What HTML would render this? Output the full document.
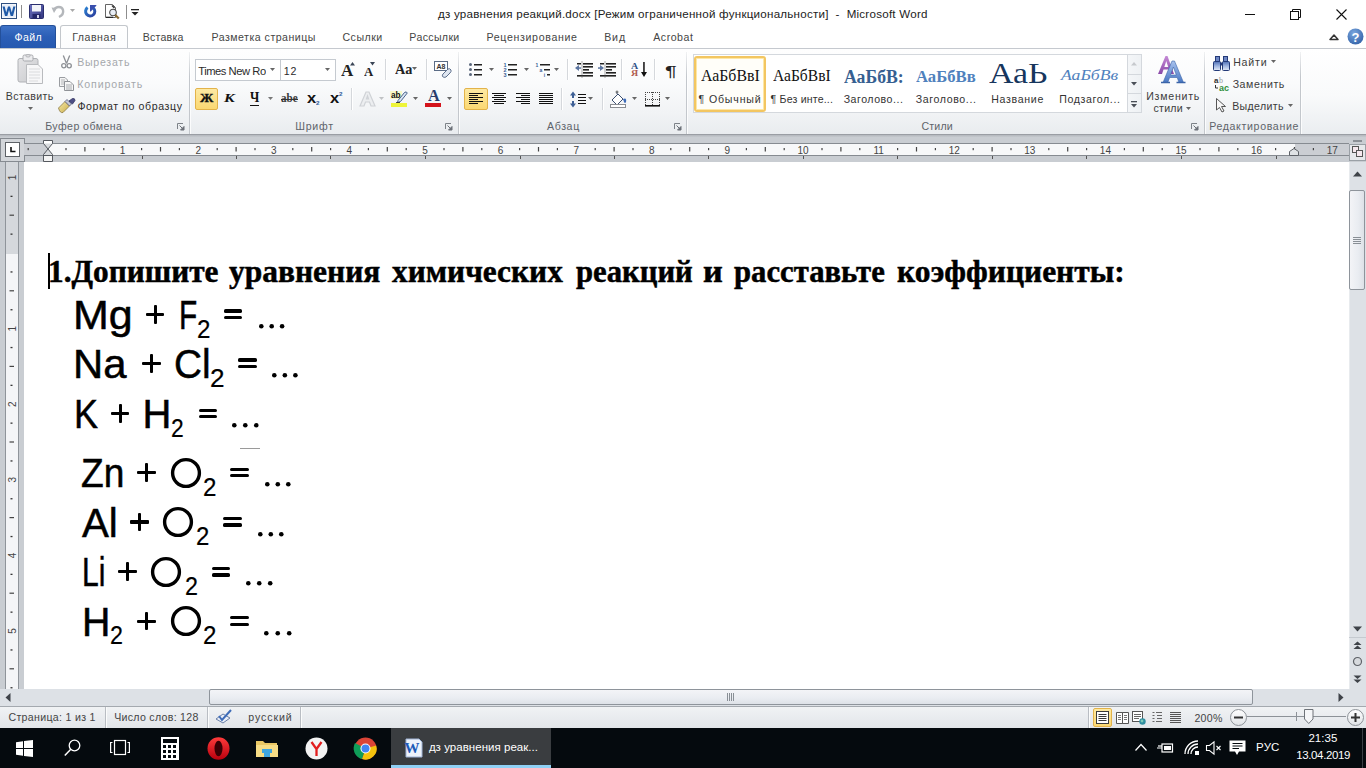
<!DOCTYPE html>
<html><head><meta charset="utf-8">
<style>
*{margin:0;padding:0;box-sizing:border-box}
html,body{width:1366px;height:768px;overflow:hidden;background:#fff;font-family:"Liberation Sans",sans-serif;position:relative}
.a{position:absolute}
.t{line-height:1;white-space:nowrap}
svg.a{overflow:visible}
</style></head><body>

<div class="a" style="left:0px;top:0px;width:1366px;height:48px;background:#fff"></div>
<svg class="a" style="left:1px;top:3px;" width="17" height="17" viewBox="0 0 17 17"><rect x="0.5" y="0.5" width="15" height="15" fill="#fff" stroke="#2f4f80"/><rect x="1.5" y="1.5" width="13" height="13" fill="#e8eef8"/><path d="M1.5 3.5 L4 13 H6.3 L8 7 L9.7 13 H12 L14.5 3.5 H12.3 L10.8 9.5 L9 3.5 H7 L5.2 9.5 L3.7 3.5 Z" fill="#1f5aa8"/></svg>
<div class="a" style="left:21px;top:5px;width:1px;height:13px;background:#8d8d8d"></div>
<svg class="a" style="left:29px;top:4px;" width="15" height="15" viewBox="0 0 15 15"><defs><linearGradient id="sg" x1="0" y1="0" x2="1" y2="1"><stop offset="0" stop-color="#6b70c0"/><stop offset="1" stop-color="#33377f"/></linearGradient></defs><rect x="0.5" y="0.5" width="14" height="14" rx="1" fill="url(#sg)" stroke="#2a2e6e"/><rect x="3" y="1" width="9" height="6.5" fill="#f2f3f8"/><rect x="3.5" y="10" width="8" height="4.5" fill="#23266a"/><rect x="8" y="11" width="2" height="3" fill="#d0d2ea"/></svg>
<svg class="a" style="left:51px;top:4px;" width="14" height="14" viewBox="0 0 14 14"><path d="M3 6 C5 2 11 2 12 6 C13 10 10 12 8 13" fill="none" stroke="#b4b7bb" stroke-width="2.4"/><path d="M0.5 3.5 L6 4 L3 9 Z" fill="#b4b7bb"/></svg>
<svg class="a" style="left:70px;top:9px;" width="6" height="4" viewBox="0 0 6 4"><path d="M0 0 H5 L2.5 3 Z" fill="#a8a8a8"/></svg>
<svg class="a" style="left:84px;top:5px;" width="13" height="12" viewBox="0 0 13 12"><defs><linearGradient id="rg" x1="0" y1="0" x2="1" y2="1"><stop offset="0" stop-color="#2a7fd0"/><stop offset="1" stop-color="#2c3f9e"/></linearGradient></defs><path d="M3.6 2.6 A4.6 4.6 0 1 0 9.3 3" fill="none" stroke="url(#rg)" stroke-width="3"/><path d="M6 0 H12.3 V0.8 L6.8 6.5 H6 Z" fill="#3a4fae"/></svg>
<svg class="a" style="left:105px;top:4px;" width="15" height="15" viewBox="0 0 15 15"><path d="M0.5 0.5 H7.5 L10.5 3.5 V13.5 H0.5 Z" fill="#fff" stroke="#666"/><path d="M1 13.3 H8" stroke="#222" stroke-width="1.2"/><circle cx="8" cy="8.5" r="3.3" fill="#e9eef5" stroke="#4a4a4a" stroke-width="1.1"/><path d="M10.3 11 L13.8 14.5" stroke="#8a6a30" stroke-width="2.2"/><path d="M7 1.5 L9.5 4" stroke="#333" stroke-width="1.5"/></svg>
<div class="a" style="left:126px;top:5px;width:1px;height:14px;background:#8d8d8d"></div>
<svg class="a" style="left:131px;top:9px;" width="9" height="7" viewBox="0 0 9 7"><rect x="0" y="0" width="8" height="1.3" fill="#222"/><path d="M0.5 3 H7.5 L4 6.5 Z" fill="#222"/></svg>
<div class="a t" style="left:437.88px;top:7.68px;font-size:11.6px;color:#222;font-family:'Liberation Sans',sans-serif;font-weight:normal;font-style:normal;letter-spacing:0.238px;">дз уравнения реакций.docx [Режим ограниченной функциональности]&nbsp; -&nbsp; Microsoft Word</div>
<div class="a" style="left:1245px;top:14px;width:10px;height:1px;background:#111"></div>
<svg class="a" style="left:1290px;top:9px;" width="11" height="11" viewBox="0 0 11 11"><rect x="0.5" y="2.5" width="8" height="8" fill="none" stroke="#111"/><path d="M2.5 2.5 V0.5 H10.5 V8.5 H8.5" fill="none" stroke="#111"/></svg>
<svg class="a" style="left:1336px;top:9px;" width="11" height="11" viewBox="0 0 11 11"><path d="M0.5 0.5 L10.5 10.5 M10.5 0.5 L0.5 10.5" stroke="#111" stroke-width="1.1"/></svg>
<svg class="a" style="left:1329px;top:33px;" width="10" height="8" viewBox="0 0 10 8"><path d="M1 6.5 L5 2 L9 6.5 Z" fill="none" stroke="#333" stroke-width="1.5" stroke-linejoin="round"/></svg>
<svg class="a" style="left:1347px;top:28px;" width="17" height="17" viewBox="0 0 17 17"><defs><radialGradient id="hg" cx="0.4" cy="0.3" r="0.8"><stop offset="0" stop-color="#7aa6de"/><stop offset="1" stop-color="#2f5fa6"/></radialGradient></defs><circle cx="8.5" cy="8.5" r="8" fill="url(#hg)"/><text x="8.5" y="13.5" font-family="Liberation Sans" font-weight="bold" font-size="13" fill="#fff" text-anchor="middle">?</text></svg>
<div class="a" style="left:0;top:25px;width:56px;height:23px;border-radius:3px 3px 0 0;background:linear-gradient(#3e72c6,#2b5eb6 50%,#2659b0);border:1px solid #24509a;border-bottom:none"></div>
<div class="a t" style="left:14.42px;top:32.33px;font-size:10.6px;color:#fff;font-family:'Liberation Sans',sans-serif;font-weight:normal;font-style:normal;letter-spacing:0.416px;">Файл</div>
<div class="a" style="left:60px;top:25px;width:68px;height:24px;border-radius:3px 3px 0 0;background:linear-gradient(#fff,#fbfcfd);border:1px solid #c3c7cc;border-bottom:none"></div>
<div class="a t" style="left:72.15px;top:32.33px;font-size:10.6px;color:#454545;font-family:'Liberation Sans',sans-serif;font-weight:normal;font-style:normal;letter-spacing:0.534px;">Главная</div>
<div class="a t" style="left:142.65px;top:32.33px;font-size:10.6px;color:#454545;font-family:'Liberation Sans',sans-serif;font-weight:normal;font-style:normal;letter-spacing:0.245px;">Вставка</div>
<div class="a t" style="left:211.45px;top:32.33px;font-size:10.6px;color:#454545;font-family:'Liberation Sans',sans-serif;font-weight:normal;font-style:normal;letter-spacing:0.493px;">Разметка страницы</div>
<div class="a t" style="left:342.47px;top:32.33px;font-size:10.6px;color:#454545;font-family:'Liberation Sans',sans-serif;font-weight:normal;font-style:normal;letter-spacing:0.492px;">Ссылки</div>
<div class="a t" style="left:409.35px;top:32.33px;font-size:10.6px;color:#454545;font-family:'Liberation Sans',sans-serif;font-weight:normal;font-style:normal;letter-spacing:0.342px;">Рассылки</div>
<div class="a t" style="left:486.45px;top:32.33px;font-size:10.6px;color:#454545;font-family:'Liberation Sans',sans-serif;font-weight:normal;font-style:normal;letter-spacing:0.672px;">Рецензирование</div>
<div class="a t" style="left:604.15px;top:32.33px;font-size:10.6px;color:#454545;font-family:'Liberation Sans',sans-serif;font-weight:normal;font-style:normal;letter-spacing:0.911px;">Вид</div>
<div class="a t" style="left:653.30px;top:32.33px;font-size:10.6px;color:#454545;font-family:'Liberation Sans',sans-serif;font-weight:normal;font-style:normal;letter-spacing:0.506px;">Acrobat</div>
<div class="a" style="left:0px;top:48px;width:1366px;height:1px;background:#c5c9cf"></div>
<div class="a" style="left:0;top:49px;width:1366px;height:85px;background:linear-gradient(#fefefe 0%,#fafbfc 40%,#f1f3f5 75%,#e9ecef 100%)"></div>
<div class="a" style="left:0px;top:134px;width:1366px;height:1px;background:#9a9ea4"></div>
<svg class="a" style="left:17px;top:54px;" width="27" height="31" viewBox="0 0 27 31"><defs><linearGradient id="pg1" x1="0" y1="0" x2="1" y2="1"><stop offset="0" stop-color="#e4e4e6"/><stop offset="1" stop-color="#c9cacd"/></linearGradient></defs><rect x="1" y="4.5" width="20" height="23.5" rx="2" fill="url(#pg1)" stroke="#b0b2b6"/><rect x="6" y="1" width="10" height="6" rx="1.5" fill="#ececee" stroke="#a9abaf"/><rect x="9" y="0.5" width="4" height="2.5" rx="1" fill="#dcdcde" stroke="#a9abaf" stroke-width="0.7"/><path d="M9.5 10.5 H21 L25.5 15 V29.5 H9.5 Z" fill="#f7f7f8" stroke="#b9bbbe"/><path d="M12 15 H23 M12 18 H23 M12 21 H23 M12 24 H23 M12 27 H21" stroke="#dadbdd"/></svg>
<div class="a t" style="left:5.75px;top:90.83px;font-size:10.6px;color:#3c3c3c;font-family:'Liberation Sans',sans-serif;font-weight:normal;font-style:normal;letter-spacing:0.390px;">Вставить</div>
<svg class="a" style="left:28px;top:107px;" width="6" height="4" viewBox="0 0 6 4"><path d="M0 0 H5 L2.5 3 Z" fill="#666"/></svg>
<svg class="a" style="left:61px;top:55px;" width="11" height="14" viewBox="0 0 11 14"><path d="M2.3 0.5 L5.5 8.5 M8.7 0.5 L5.5 8.5" stroke="#8d9095" stroke-width="1.3" fill="none"/><circle cx="2.8" cy="10.8" r="2.1" fill="none" stroke="#8d9095" stroke-width="1.3"/><circle cx="8.2" cy="10.8" r="2.1" fill="none" stroke="#8d9095" stroke-width="1.3"/></svg>
<div class="a t" style="left:77.15px;top:57.33px;font-size:10.6px;color:#a5a8ac;font-family:'Liberation Sans',sans-serif;font-weight:normal;font-style:normal;letter-spacing:0.736px;">Вырезать</div>
<svg class="a" style="left:59px;top:77px;" width="16" height="14" viewBox="0 0 16 14"><path d="M0.5 0.5 H6 L8.5 3 V9.5 H0.5 Z" fill="#f4f4f4" stroke="#9a9da1"/><path d="M2 3 H6 M2 5 H7 M2 7 H7" stroke="#b4b6b9"/><path d="M5.5 4.5 H11 L14.5 8 V13.5 H5.5 Z" fill="#f6f6f6" stroke="#8f9297"/><path d="M7 8 H13 M7 10 H13 M7 12 H13" stroke="#a9acb0"/></svg>
<div class="a t" style="left:77.15px;top:79.33px;font-size:10.6px;color:#a5a8ac;font-family:'Liberation Sans',sans-serif;font-weight:normal;font-style:normal;letter-spacing:0.910px;">Копировать</div>
<svg class="a" style="left:58px;top:98px;" width="18" height="16" viewBox="0 0 18 16"><defs><linearGradient id="fpg" x1="0" y1="0" x2="1" y2="1"><stop offset="0" stop-color="#f6eaa8"/><stop offset="1" stop-color="#c9ac4a"/></linearGradient></defs><path d="M0.5 10 L7 3.5 L11.5 8 L5 14.5 Q2 15.5 0.5 10 Z" fill="url(#fpg)" stroke="#8b7a45" stroke-width="0.8"/><path d="M7 3.5 L9 1.5 L13.5 6 L11.5 8 Z" fill="#c5c8d8" stroke="#555a78" stroke-width="0.8"/><path d="M11 3 L14.5 0.5 Q17 0 17 2.5 L14.5 6 Z" fill="#4d4f86" stroke="#30325e" stroke-width="0.8"/></svg>
<div class="a t" style="left:77.42px;top:101.33px;font-size:10.6px;color:#2b2b2b;font-family:'Liberation Sans',sans-serif;font-weight:normal;font-style:normal;letter-spacing:0.597px;">Формат по образцу</div>
<div class="a t" style="left:45.15px;top:121.33px;font-size:10.6px;color:#5e636a;font-family:'Liberation Sans',sans-serif;font-weight:normal;font-style:normal;letter-spacing:0.438px;">Буфер обмена</div>
<svg class="a" style="left:177px;top:123px;" width="8" height="8" viewBox="0 0 8 8"><path d="M0.5 6 V0.5 H6" fill="none" stroke="#7d8288"/><path d="M2.5 2.5 L6.5 6.5 M7 3.5 V7 H3.5 Z" stroke="#6c7178" fill="#6c7178"/></svg>
<div class="a" style="left:189px;top:52px;width:1px;height:82px;background:linear-gradient(rgba(190,195,201,0.2),#c3c7cc 30%,#c3c7cc)"></div>
<div class="a" style="left:190px;top:52px;width:1px;height:82px;background:rgba(255,255,255,0.8)"></div>
<div class="a" style="left:195px;top:59px;width:86px;height:22px;background:#fff;border:1px solid #c5cad0"></div>
<div class="a" style="left:196px;top:60px;width:70px;height:20px;overflow:hidden">
<div class="a t" style="left:2.18px;top:5.52px;font-size:11.2px;color:#2b2b2b;font-family:'Liberation Sans',sans-serif;font-weight:normal;font-style:normal;letter-spacing:-0.45px;">Times New Roman</div>
</div>
<svg class="a" style="left:270px;top:68px;" width="6" height="4" viewBox="0 0 6 4"><path d="M0 0 H5 L2.5 3 Z" fill="#666"/></svg>
<div class="a" style="left:280px;top:59px;width:56px;height:22px;background:#fff;border:1px solid #c5cad0"></div>
<div class="a t" style="left:283.70px;top:66.33px;font-size:10.6px;color:#2b2b2b;font-family:'Liberation Sans',sans-serif;font-weight:normal;font-style:normal;letter-spacing:0.859px;">12</div>
<svg class="a" style="left:325px;top:68px;" width="6" height="4" viewBox="0 0 6 4"><path d="M0 0 H5 L2.5 3 Z" fill="#666"/></svg>
<div class="a t" style="left:340.83px;top:61.76px;font-size:17px;color:#222;font-family:'Liberation Serif',serif;font-weight:bold;font-style:normal;transform-origin:0 0;transform:scaleX(1.0013);">A</div>
<svg class="a" style="left:350px;top:62px;" width="6" height="4" viewBox="0 0 6 4"><path d="M0 3.5 H5 L2.5 0 Z" fill="#3a4556"/></svg>
<div class="a t" style="left:363.87px;top:65.95px;font-size:12px;color:#222;font-family:'Liberation Serif',serif;font-weight:bold;font-style:normal;transform-origin:0 0;transform:scaleX(1.0638);">A</div>
<svg class="a" style="left:370px;top:62px;" width="6" height="4" viewBox="0 0 6 4"><path d="M0 0 H5 L2.5 3.5 Z" fill="#3a4556"/></svg>
<div class="a" style="left:385px;top:59px;width:1px;height:21px;background:#d5d8dc"></div>
<div class="a" style="left:386px;top:59px;width:1px;height:21px;background:#fff"></div>
<div class="a t" style="left:394.86px;top:62.44px;font-size:15px;color:#222;font-family:'Liberation Serif',serif;font-weight:bold;font-style:normal;transform-origin:0 0;transform:scaleX(0.9484);">Aa</div>
<svg class="a" style="left:412px;top:67px;" width="6" height="4" viewBox="0 0 6 4"><path d="M0 0 H5 L2.5 3 Z" fill="#666"/></svg>
<div class="a" style="left:426px;top:59px;width:1px;height:21px;background:#d5d8dc"></div>
<div class="a" style="left:427px;top:59px;width:1px;height:21px;background:#fff"></div>
<svg class="a" style="left:434px;top:61px;" width="18" height="18" viewBox="0 0 18 18"><rect x="0.5" y="0.5" width="13" height="9" fill="#fff" stroke="#5b6c86"/><text x="7" y="8" font-family="Liberation Sans" font-weight="bold" font-size="7" fill="#333" text-anchor="middle">A8</text><path d="M9 13 L14 8 Q16 7 17 9 Q17.5 10.5 16 12 L12 16 Q10 17 8.5 15.5 Q8 14 9 13 Z" fill="#dfe6f0" stroke="#5d6f8c"/></svg>
<div class="a" style="left:195px;top:88px;width:23px;height:22px;background:linear-gradient(#fde9a3,#fbd872);border:1px solid #e3b34a;border-radius:2px"></div>
<div class="a t" style="left:200.00px;top:92.33px;font-size:12.5px;color:#111;font-family:'Liberation Serif',serif;font-weight:bold;font-style:normal;transform-origin:0 0;transform:scaleX(1.0828);-webkit-text-stroke:0.3px #111;">Ж</div>
<div class="a t" style="left:224.16px;top:92.33px;font-size:12.5px;color:#111;font-family:'Liberation Serif',serif;font-weight:bold;font-style:italic;transform-origin:0 0;transform:scaleX(1.2735);">К</div>
<div class="a t" style="left:249.87px;top:91.28px;font-size:14px;color:#111;font-family:'Liberation Serif',serif;font-weight:bold;font-style:normal;transform-origin:0 0;transform:scaleX(0.9054);">Ч</div>
<div class="a" style="left:250px;top:105px;width:9px;height:1.2px;background:#111"></div>
<svg class="a" style="left:268px;top:97px;" width="6" height="4" viewBox="0 0 6 4"><path d="M0 0 H5 L2.5 3 Z" fill="#777"/></svg>
<div class="a t" style="left:280.67px;top:93.37px;font-size:11.5px;color:#3a3a3a;font-family:'Liberation Serif',serif;font-weight:bold;font-style:normal;transform-origin:0 0;transform:scaleX(0.9628);">abe</div>
<div class="a" style="left:280.5px;top:99px;width:17px;height:1px;background:#333"></div>
<div class="a t" style="left:306.92px;top:91.15px;font-size:14px;color:#111;font-family:'Liberation Sans',sans-serif;font-weight:bold;font-style:normal;transform-origin:0 0;transform:scaleX(1.1796);">x</div>
<div class="a t" style="left:316.28px;top:100.42px;font-size:6px;color:#2f5a9a;font-family:'Liberation Sans',sans-serif;font-weight:bold;font-style:normal;transform-origin:0 0;transform:scaleX(1.0417);">2</div>
<div class="a t" style="left:329.92px;top:91.15px;font-size:14px;color:#111;font-family:'Liberation Sans',sans-serif;font-weight:bold;font-style:normal;transform-origin:0 0;transform:scaleX(1.1796);">x</div>
<div class="a t" style="left:338.78px;top:91.42px;font-size:6px;color:#2f5a9a;font-family:'Liberation Sans',sans-serif;font-weight:bold;font-style:normal;transform-origin:0 0;transform:scaleX(1.0417);">2</div>
<div class="a" style="left:351px;top:88px;width:1px;height:22px;background:#d5d8dc"></div>
<div class="a" style="left:352px;top:88px;width:1px;height:22px;background:#fff"></div>
<svg class="a" style="left:359px;top:91px;" width="17" height="16" viewBox="0 0 17 16"><path d="M1 15 L7 1 H10 L16 15 H12 L10.5 11 H6.5 L5 15 Z M7.5 8 H9.5 L8.5 5 Z" fill="#eceef0" stroke="#cfd2d6" stroke-width="1.2"/></svg>
<svg class="a" style="left:379px;top:97px;" width="6" height="4" viewBox="0 0 6 4"><path d="M0 0 H5 L2.5 3 Z" fill="#c0c2c5"/></svg>
<div class="a" style="left:390px;top:91px;width:12px;height:8px;background:rgba(250,250,150,0.5)"></div>
<div class="a t" style="left:390.75px;top:89.76px;font-size:9.5px;color:#111;font-family:'Liberation Sans',sans-serif;font-weight:bold;font-style:normal;transform-origin:0 0;transform:scaleX(0.8652);">ab</div>
<svg class="a" style="left:397px;top:91px;" width="11" height="12" viewBox="0 0 11 12"><path d="M1 9.5 L7.5 1.5 Q9.5 0 10.3 2 L3.5 10.5 L0.5 11.5 Z" fill="#dce6f4" stroke="#37527e" stroke-width="0.9"/><path d="M-1 11.5 H3" stroke="#222" stroke-width="0.8"/></svg>
<div class="a" style="left:390.5px;top:103px;width:16.5px;height:3.6px;background:#eef53a"></div>
<svg class="a" style="left:413px;top:97px;" width="6" height="4" viewBox="0 0 6 4"><path d="M0 0 H5 L2.5 3 Z" fill="#666"/></svg>
<div class="a t" style="left:427.84px;top:88.30px;font-size:16px;color:#2a3d6c;font-family:'Liberation Serif',serif;font-weight:bold;font-style:normal;transform-origin:0 0;transform:scaleX(1.0195);">A</div>
<div class="a" style="left:425px;top:102.8px;width:16px;height:4px;background:#d4141c"></div>
<svg class="a" style="left:447px;top:97px;" width="6" height="4" viewBox="0 0 6 4"><path d="M0 0 H5 L2.5 3 Z" fill="#666"/></svg>
<div class="a t" style="left:295.15px;top:121.33px;font-size:10.6px;color:#5e636a;font-family:'Liberation Sans',sans-serif;font-weight:normal;font-style:normal;letter-spacing:0.796px;">Шрифт</div>
<svg class="a" style="left:445px;top:123px;" width="8" height="8" viewBox="0 0 8 8"><path d="M0.5 6 V0.5 H6" fill="none" stroke="#7d8288"/><path d="M2.5 2.5 L6.5 6.5 M7 3.5 V7 H3.5 Z" stroke="#6c7178" fill="#6c7178"/></svg>
<div class="a" style="left:458px;top:52px;width:1px;height:82px;background:linear-gradient(rgba(190,195,201,0.2),#c3c7cc 30%,#c3c7cc)"></div>
<div class="a" style="left:459px;top:52px;width:1px;height:82px;background:rgba(255,255,255,0.8)"></div>
<svg class="a" style="left:469px;top:63px;" width="14" height="13" viewBox="0 0 14 13"><circle cx="1.5" cy="1.5" r="1.5" fill="#58657a"/><circle cx="1.5" cy="6.5" r="1.5" fill="#58657a"/><circle cx="1.5" cy="11.5" r="1.5" fill="#58657a"/><rect x="5" y="1" width="8" height="1.5" fill="#222"/><rect x="5" y="6" width="8" height="1.5" fill="#222"/><rect x="5" y="11" width="8" height="1.5" fill="#222"/></svg>
<svg class="a" style="left:489px;top:68px;" width="6" height="4" viewBox="0 0 6 4"><path d="M0 0 H5 L2.5 3 Z" fill="#666"/></svg>
<svg class="a" style="left:502px;top:62px;" width="16" height="16" viewBox="0 0 16 16"><text x="3" y="5" font-size="5.5" font-weight="bold" font-family="Liberation Sans" fill="#3a5f95" text-anchor="middle">1</text><text x="3" y="10" font-size="5.5" font-weight="bold" font-family="Liberation Sans" fill="#3a5f95" text-anchor="middle">2</text><text x="3" y="15" font-size="5.5" font-weight="bold" font-family="Liberation Sans" fill="#3a5f95" text-anchor="middle">3</text><rect x="6" y="2" width="9" height="1.5" fill="#222"/><rect x="6" y="7" width="9" height="1.5" fill="#222"/><rect x="6" y="12" width="9" height="1.5" fill="#222"/></svg>
<svg class="a" style="left:524px;top:68px;" width="6" height="4" viewBox="0 0 6 4"><path d="M0 0 H5 L2.5 3 Z" fill="#666"/></svg>
<svg class="a" style="left:535px;top:62px;" width="18" height="16" viewBox="0 0 18 16"><text x="2" y="4.5" font-size="5" font-weight="bold" font-family="Liberation Sans" fill="#3a5f95" text-anchor="middle">1</text><text x="6" y="10" font-size="5" font-weight="bold" font-family="Liberation Sans" fill="#3a5f95" text-anchor="middle">a</text><text x="9.5" y="15" font-size="5" font-weight="bold" font-family="Liberation Sans" fill="#3a5f95" text-anchor="middle">i</text><rect x="5" y="2" width="10" height="1.5" fill="#222"/><rect x="9" y="7" width="6" height="1.5" fill="#222"/><rect x="12" y="12" width="3" height="1.5" fill="#222"/></svg>
<svg class="a" style="left:554px;top:68px;" width="6" height="4" viewBox="0 0 6 4"><path d="M0 0 H5 L2.5 3 Z" fill="#666"/></svg>
<div class="a" style="left:567px;top:59px;width:1px;height:21px;background:#d5d8dc"></div>
<div class="a" style="left:568px;top:59px;width:1px;height:21px;background:#fff"></div>
<svg class="a" style="left:575px;top:61px;" width="18" height="17" viewBox="0 0 18 17"><rect x="2" y="2" width="4" height="1.5" fill="#222"/><rect x="8" y="2" width="10" height="1.6" fill="#222"/><rect x="8" y="5" width="10" height="1.6" fill="#222"/><rect x="8" y="8" width="6" height="1.6" fill="#222"/><rect x="8" y="11" width="10" height="1.6" fill="#222"/><rect x="2" y="14" width="16" height="1.6" fill="#222"/><path d="M0 7 L4 4 V10 Z" fill="#5a74a0"/><rect x="3" y="6.3" width="3" height="1.5" fill="#5a74a0"/><rect x="6.6" y="0" width="0.8" height="17" fill="#555" opacity="0.6"/></svg>
<svg class="a" style="left:598px;top:61px;" width="18" height="17" viewBox="0 0 18 17"><rect x="2" y="2" width="4" height="1.5" fill="#222"/><rect x="8" y="2" width="10" height="1.6" fill="#222"/><rect x="8" y="5" width="10" height="1.6" fill="#222"/><rect x="8" y="8" width="6" height="1.6" fill="#222"/><rect x="8" y="11" width="10" height="1.6" fill="#222"/><rect x="2" y="14" width="16" height="1.6" fill="#222"/><path d="M6 7 L2 4 V10 Z" fill="#5a74a0"/><rect x="0" y="6.3" width="3" height="1.5" fill="#5a74a0"/><rect x="6.6" y="0" width="0.8" height="17" fill="#555" opacity="0.6"/></svg>
<div class="a" style="left:621px;top:59px;width:1px;height:21px;background:#d5d8dc"></div>
<div class="a" style="left:622px;top:59px;width:1px;height:21px;background:#fff"></div>
<div class="a t" style="left:630.90px;top:62.46px;font-size:9px;color:#2e4f86;font-family:'Liberation Serif',serif;font-weight:bold;font-style:normal;transform-origin:0 0;transform:scaleX(1.1032);">A</div>
<div class="a t" style="left:631.00px;top:69.46px;font-size:9px;color:#b05a50;font-family:'Liberation Serif',serif;font-weight:bold;font-style:normal;transform-origin:0 0;transform:scaleX(1.1032);">Я</div>
<svg class="a" style="left:641px;top:62px;" width="6" height="16" viewBox="0 0 6 16"><rect x="2.2" y="0" width="1.5" height="12" fill="#111"/><path d="M0 10 H6 L3 15 Z" fill="#111"/></svg>
<div class="a" style="left:654px;top:59px;width:1px;height:21px;background:#d5d8dc"></div>
<div class="a" style="left:655px;top:59px;width:1px;height:21px;background:#fff"></div>
<div class="a t" style="left:665.12px;top:64.15px;font-size:14px;color:#222;font-family:'Liberation Sans',sans-serif;font-weight:normal;font-style:normal;transform-origin:0 0;transform:scaleX(1.5699);">¶</div>
<div class="a" style="left:464px;top:88px;width:24px;height:22px;background:linear-gradient(#fde9a3,#fbd872);border:1px solid #e3b34a;border-radius:2px"></div>
<svg class="a" style="left:469px;top:93px;" width="15" height="12" viewBox="0 0 15 12"><rect x="0" y="0" width="14" height="1" fill="#111"/><rect x="0" y="2" width="9" height="1" fill="#111"/><rect x="0" y="4" width="14" height="1" fill="#111"/><rect x="0" y="6" width="9" height="1" fill="#111"/><rect x="0" y="8" width="14" height="1" fill="#111"/><rect x="0" y="10" width="9" height="1" fill="#111"/></svg>
<svg class="a" style="left:492px;top:93px;" width="15" height="12" viewBox="0 0 15 12"><rect x="0" y="0" width="14" height="1" fill="#111"/><rect x="2" y="2" width="10" height="1" fill="#111"/><rect x="0" y="4" width="14" height="1" fill="#111"/><rect x="2" y="6" width="10" height="1" fill="#111"/><rect x="0" y="8" width="14" height="1" fill="#111"/><rect x="2" y="10" width="10" height="1" fill="#111"/></svg>
<svg class="a" style="left:516px;top:93px;" width="15" height="12" viewBox="0 0 15 12"><rect x="0" y="0" width="14" height="1" fill="#111"/><rect x="5" y="2" width="9" height="1" fill="#111"/><rect x="0" y="4" width="14" height="1" fill="#111"/><rect x="5" y="6" width="9" height="1" fill="#111"/><rect x="0" y="8" width="14" height="1" fill="#111"/><rect x="5" y="10" width="9" height="1" fill="#111"/></svg>
<svg class="a" style="left:539px;top:93px;" width="15" height="12" viewBox="0 0 15 12"><rect x="0" y="0" width="14" height="1" fill="#111"/><rect x="0" y="2" width="14" height="1" fill="#111"/><rect x="0" y="4" width="14" height="1" fill="#111"/><rect x="0" y="6" width="14" height="1" fill="#111"/><rect x="0" y="8" width="14" height="1" fill="#111"/><rect x="0" y="10" width="14" height="1" fill="#111"/></svg>
<div class="a" style="left:561px;top:88px;width:1px;height:22px;background:#d5d8dc"></div>
<div class="a" style="left:562px;top:88px;width:1px;height:22px;background:#fff"></div>
<svg class="a" style="left:570px;top:91px;" width="18" height="17" viewBox="0 0 18 17"><path d="M3 0.5 L6 4.5 H4 V7 H2 V4.5 H0 Z" fill="#3e6096"/><path d="M3 16.5 L6 12.5 H4 V10 H2 V12.5 H0 Z" fill="#3e6096"/><path d="M8 3.5 H16 M8 6.5 H16 M8 9.5 H16 M8 12.5 H16" stroke="#111" stroke-width="1.1"/></svg>
<svg class="a" style="left:588px;top:97px;" width="6" height="4" viewBox="0 0 6 4"><path d="M0 0 H5 L2.5 3 Z" fill="#666"/></svg>
<div class="a" style="left:602px;top:88px;width:1px;height:22px;background:#d5d8dc"></div>
<div class="a" style="left:603px;top:88px;width:1px;height:22px;background:#fff"></div>
<svg class="a" style="left:610px;top:91px;" width="19" height="17" viewBox="0 0 19 17"><path d="M2 9 L8 3 L13 8 L7 14 Z" fill="#fff" stroke="#3c4f70" stroke-width="1"/><path d="M7 3 V0.5" stroke="#3c4f70"/><circle cx="7" cy="1" r="1" fill="none" stroke="#666"/><path d="M13 8 Q17 6 16 11 Q15 13 14 11 Z" fill="#3d6bb8"/><rect x="0.5" y="13.5" width="15" height="3" fill="#fff" stroke="#8a8d92"/></svg>
<svg class="a" style="left:632px;top:97px;" width="6" height="4" viewBox="0 0 6 4"><path d="M0 0 H5 L2.5 3 Z" fill="#666"/></svg>
<svg class="a" style="left:645px;top:92px;" width="15" height="15" viewBox="0 0 15 15"><rect x="0" y="0" width="1" height="1" fill="#444"/><rect x="0" y="7" width="1" height="1" fill="#444"/><rect x="0" y="0" width="1" height="1" fill="#444"/><rect x="7" y="0" width="1" height="1" fill="#444"/><rect x="14" y="0" width="1" height="1" fill="#444"/><rect x="2" y="0" width="1" height="1" fill="#444"/><rect x="2" y="7" width="1" height="1" fill="#444"/><rect x="0" y="2" width="1" height="1" fill="#444"/><rect x="7" y="2" width="1" height="1" fill="#444"/><rect x="14" y="2" width="1" height="1" fill="#444"/><rect x="4" y="0" width="1" height="1" fill="#444"/><rect x="4" y="7" width="1" height="1" fill="#444"/><rect x="0" y="4" width="1" height="1" fill="#444"/><rect x="7" y="4" width="1" height="1" fill="#444"/><rect x="14" y="4" width="1" height="1" fill="#444"/><rect x="6" y="0" width="1" height="1" fill="#444"/><rect x="6" y="7" width="1" height="1" fill="#444"/><rect x="0" y="6" width="1" height="1" fill="#444"/><rect x="7" y="6" width="1" height="1" fill="#444"/><rect x="14" y="6" width="1" height="1" fill="#444"/><rect x="8" y="0" width="1" height="1" fill="#444"/><rect x="8" y="7" width="1" height="1" fill="#444"/><rect x="0" y="8" width="1" height="1" fill="#444"/><rect x="7" y="8" width="1" height="1" fill="#444"/><rect x="14" y="8" width="1" height="1" fill="#444"/><rect x="10" y="0" width="1" height="1" fill="#444"/><rect x="10" y="7" width="1" height="1" fill="#444"/><rect x="0" y="10" width="1" height="1" fill="#444"/><rect x="7" y="10" width="1" height="1" fill="#444"/><rect x="14" y="10" width="1" height="1" fill="#444"/><rect x="12" y="0" width="1" height="1" fill="#444"/><rect x="12" y="7" width="1" height="1" fill="#444"/><rect x="0" y="12" width="1" height="1" fill="#444"/><rect x="7" y="12" width="1" height="1" fill="#444"/><rect x="14" y="12" width="1" height="1" fill="#444"/><rect x="14" y="0" width="1" height="1" fill="#444"/><rect x="14" y="7" width="1" height="1" fill="#444"/><rect x="0" y="13" width="15" height="1.6" fill="#111"/></svg>
<svg class="a" style="left:665px;top:97px;" width="6" height="4" viewBox="0 0 6 4"><path d="M0 0 H5 L2.5 3 Z" fill="#666"/></svg>
<div class="a t" style="left:547.00px;top:121.33px;font-size:10.6px;color:#5e636a;font-family:'Liberation Sans',sans-serif;font-weight:normal;font-style:normal;letter-spacing:0.620px;">Абзац</div>
<svg class="a" style="left:674px;top:123px;" width="8" height="8" viewBox="0 0 8 8"><path d="M0.5 6 V0.5 H6" fill="none" stroke="#7d8288"/><path d="M2.5 2.5 L6.5 6.5 M7 3.5 V7 H3.5 Z" stroke="#6c7178" fill="#6c7178"/></svg>
<div class="a" style="left:686px;top:52px;width:1px;height:82px;background:linear-gradient(rgba(190,195,201,0.2),#c3c7cc 30%,#c3c7cc)"></div>
<div class="a" style="left:687px;top:52px;width:1px;height:82px;background:rgba(255,255,255,0.8)"></div>
<div class="a" style="left:693px;top:54px;width:449px;height:59px;background:#fff;border:1px solid #d4d8dd"></div>
<div class="a" style="left:694px;top:56px;width:72px;height:56px;border:2px solid #f3c661;border-radius:3px;background:#fffef9;box-shadow:inset 0 0 0 1px #fde7a6"></div>
<div class="a t" style="left:700.84px;top:67.60px;font-size:16px;color:#111;font-family:'Liberation Serif',serif;font-weight:normal;font-style:normal;transform-origin:0 0;transform:scaleX(0.9891);">АаБбВвI</div>
<div class="a t" style="left:698.58px;top:93.83px;font-size:10.6px;color:#333;font-family:'Liberation Sans',sans-serif;font-weight:normal;font-style:normal;letter-spacing:0.834px;">¶ Обычный</div>
<div class="a t" style="left:772.84px;top:67.60px;font-size:16px;color:#111;font-family:'Liberation Serif',serif;font-weight:normal;font-style:normal;transform-origin:0 0;transform:scaleX(0.9720);">АаБбВвI</div>
<div class="a t" style="left:770.58px;top:93.83px;font-size:10.6px;color:#333;font-family:'Liberation Sans',sans-serif;font-weight:normal;font-style:normal;letter-spacing:0.172px;">¶ Без инте...</div>
<div class="a t" style="left:843.82px;top:67.92px;font-size:18px;color:#365f91;font-family:'Liberation Serif',serif;font-weight:bold;font-style:normal;transform-origin:0 0;transform:scaleX(0.9854);">АаБбВ:</div>
<div class="a t" style="left:843.63px;top:93.83px;font-size:10.6px;color:#333;font-family:'Liberation Sans',sans-serif;font-weight:normal;font-style:normal;letter-spacing:0.527px;">Заголово...</div>
<div class="a t" style="left:915.83px;top:68.60px;font-size:16px;color:#4f81bd;font-family:'Liberation Serif',serif;font-weight:bold;font-style:normal;transform-origin:0 0;transform:scaleX(1.0431);">АаБбВв</div>
<div class="a t" style="left:915.63px;top:93.83px;font-size:10.6px;color:#333;font-family:'Liberation Sans',sans-serif;font-weight:normal;font-style:normal;letter-spacing:0.627px;">Заголово...</div>
<div class="a t" style="left:988.66px;top:57.88px;font-size:30px;color:#17365d;font-family:'Liberation Serif',serif;font-weight:normal;font-style:normal;transform-origin:0 0;transform:scaleX(1.1276);">АаЬ</div>
<div class="a t" style="left:991.15px;top:93.83px;font-size:10.6px;color:#333;font-family:'Liberation Sans',sans-serif;font-weight:normal;font-style:normal;letter-spacing:0.699px;">Название</div>
<div class="a t" style="left:1060.97px;top:68.44px;font-size:15px;color:#4f81bd;font-family:'Liberation Serif',serif;font-weight:normal;font-style:italic;transform-origin:0 0;transform:scaleX(1.1807);">АаБбВв</div>
<div class="a t" style="left:1059.15px;top:93.83px;font-size:10.6px;color:#333;font-family:'Liberation Sans',sans-serif;font-weight:normal;font-style:normal;letter-spacing:0.627px;">Подзагол...</div>
<div class="a" style="left:1127px;top:54px;width:15px;height:59px;background:linear-gradient(90deg,#f4f6f8,#eef1f4);border:1px solid #d4d8dd"></div>
<div class="a" style="left:1128px;top:74px;width:13px;height:1px;background:#d4d8dd"></div>
<div class="a" style="left:1128px;top:93px;width:13px;height:1px;background:#d4d8dd"></div>
<svg class="a" style="left:1131px;top:62px;" width="7" height="4" viewBox="0 0 7 4"><path d="M0 3.5 H6 L3 0 Z" fill="#c6c9cd"/></svg>
<svg class="a" style="left:1131px;top:82px;" width="7" height="4" viewBox="0 0 7 4"><path d="M0 0 H6 L3 3.5 Z" fill="#4a4f57"/></svg>
<svg class="a" style="left:1131px;top:101px;" width="7" height="7" viewBox="0 0 7 7"><rect x="0" y="0" width="6" height="1.3" fill="#4a4f57"/><path d="M0 3 H6 L3 6.5 Z" fill="#4a4f57"/></svg>
<svg class="a" style="left:1157px;top:55px;" width="32" height="28" viewBox="0 0 32 28"><defs><linearGradient id="ag1" x1="0" y1="0" x2="0" y2="1"><stop offset="0" stop-color="#c58ad6"/><stop offset="1" stop-color="#8a4aa8"/></linearGradient><linearGradient id="ag2" x1="0" y1="0" x2="0" y2="1"><stop offset="0" stop-color="#a9c3ee"/><stop offset="1" stop-color="#4a78c4"/></linearGradient></defs><path d="M1 19 L8.5 1 H10.5 L17 19 H13.5 L12 14.5 H6.5 L5 19 Z M7.3 12 H11.2 L9.3 6 Z" fill="url(#ag1)"/><path d="M6 27.5 L15 6 H17.5 L26.5 27.5 H22 L20.2 22.5 H12.6 L10.8 27.5 Z M13.5 20 H19.3 L16.4 12 Z" fill="url(#ag2)" stroke="#3b64a8" stroke-width="0.6"/><path d="M4 27.5 H13 M19.5 27.5 H28.5" stroke="#3b64a8" stroke-width="1.4"/></svg>
<div class="a t" style="left:1146.15px;top:91.33px;font-size:10.6px;color:#3c3c3c;font-family:'Liberation Sans',sans-serif;font-weight:normal;font-style:normal;letter-spacing:0.781px;">Изменить</div>
<div class="a t" style="left:1153.58px;top:103.33px;font-size:10.6px;color:#3c3c3c;font-family:'Liberation Sans',sans-serif;font-weight:normal;font-style:normal;letter-spacing:0.242px;">стили</div>
<svg class="a" style="left:1186px;top:107px;" width="6" height="4" viewBox="0 0 6 4"><path d="M0 0 H5 L2.5 3 Z" fill="#666"/></svg>
<div class="a t" style="left:921.47px;top:121.33px;font-size:10.6px;color:#5e636a;font-family:'Liberation Sans',sans-serif;font-weight:normal;font-style:normal;letter-spacing:0.186px;">Стили</div>
<svg class="a" style="left:1191px;top:123px;" width="8" height="8" viewBox="0 0 8 8"><path d="M0.5 6 V0.5 H6" fill="none" stroke="#7d8288"/><path d="M2.5 2.5 L6.5 6.5 M7 3.5 V7 H3.5 Z" stroke="#6c7178" fill="#6c7178"/></svg>
<div class="a" style="left:1204px;top:52px;width:1px;height:82px;background:linear-gradient(rgba(190,195,201,0.2),#c3c7cc 30%,#c3c7cc)"></div>
<div class="a" style="left:1205px;top:52px;width:1px;height:82px;background:rgba(255,255,255,0.8)"></div>
<svg class="a" style="left:1213px;top:56px;" width="17" height="15" viewBox="0 0 17 15"><defs><linearGradient id="bn" x1="0" y1="0" x2="0" y2="1"><stop offset="0" stop-color="#4f6fb5"/><stop offset="0.5" stop-color="#9fb5e0"/><stop offset="1" stop-color="#e6ecf8"/></linearGradient></defs><rect x="2.5" y="0.5" width="4" height="5" fill="#6d86c4" stroke="#243a78"/><rect x="10.5" y="0.5" width="4" height="5" fill="#6d86c4" stroke="#243a78"/><rect x="0.5" y="5.5" width="7" height="9" rx="1" fill="url(#bn)" stroke="#243a78"/><rect x="9.5" y="5.5" width="7" height="9" rx="1" fill="url(#bn)" stroke="#243a78"/><rect x="7" y="6.5" width="3" height="3" fill="#243a78"/></svg>
<div class="a t" style="left:1233.15px;top:57.33px;font-size:10.6px;color:#3c3c3c;font-family:'Liberation Sans',sans-serif;font-weight:normal;font-style:normal;letter-spacing:0.832px;">Найти</div>
<svg class="a" style="left:1271px;top:60px;" width="6" height="4" viewBox="0 0 6 4"><path d="M0 0 H5 L2.5 3 Z" fill="#666"/></svg>
<svg class="a" style="left:1214px;top:76px;" width="16" height="15" viewBox="0 0 16 15"><text x="0" y="6.5" font-size="8" font-weight="bold" font-family="Liberation Sans" fill="#333">a</text><text x="5" y="6.5" font-size="8" font-family="Liberation Serif" fill="#999">b</text><text x="5" y="14.5" font-size="9" font-weight="bold" font-family="Liberation Sans" fill="#2f8f3a">ac</text><path d="M1.5 9 V12 H4" fill="none" stroke="#333" stroke-width="1"/></svg>
<div class="a t" style="left:1232.63px;top:79.33px;font-size:10.6px;color:#3c3c3c;font-family:'Liberation Sans',sans-serif;font-weight:normal;font-style:normal;letter-spacing:0.593px;">Заменить</div>
<svg class="a" style="left:1216px;top:98px;" width="10" height="15" viewBox="0 0 10 15"><path d="M0.5 0.5 V12 L3.5 9.5 L6 14 L8 13 L5.5 8.5 L9.5 8.5 Z" fill="#f7f7f7" stroke="#555"/></svg>
<div class="a t" style="left:1232.15px;top:101.33px;font-size:10.6px;color:#3c3c3c;font-family:'Liberation Sans',sans-serif;font-weight:normal;font-style:normal;letter-spacing:0.344px;">Выделить</div>
<svg class="a" style="left:1288px;top:104px;" width="6" height="4" viewBox="0 0 6 4"><path d="M0 0 H5 L2.5 3 Z" fill="#666"/></svg>
<div class="a t" style="left:1209.15px;top:121.33px;font-size:10.6px;color:#5e636a;font-family:'Liberation Sans',sans-serif;font-weight:normal;font-style:normal;letter-spacing:0.658px;">Редактирование</div>
<div class="a" style="left:1300px;top:52px;width:1px;height:82px;background:linear-gradient(rgba(190,195,201,0.2),#c3c7cc 30%,#c3c7cc)"></div>
<div class="a" style="left:1301px;top:52px;width:1px;height:82px;background:rgba(255,255,255,0.8)"></div>
<div class="a" style="left:1302px;top:49px;width:64px;height:85px;background:linear-gradient(#fff,#f9fafb 55%,#eaedf0)"></div>
<div class="a" style="left:0px;top:135px;width:1366px;height:27px;background:#c9cdd2"></div>
<div class="a" style="left:0px;top:135px;width:1366px;height:2px;background:linear-gradient(#b3b7bd,#c5c9ce)"></div>
<div class="a" style="left:0px;top:138px;width:25px;height:24px;background:#d3d6da;border:1px solid #868b91"></div>
<div class="a" style="left:5px;top:142px;width:15px;height:15px;background:#fff;border:1px solid #5d6166"></div>
<svg class="a" style="left:10px;top:147px;" width="6" height="6" viewBox="0 0 6 6"><path d="M1 0 V4.5 H5.5" fill="none" stroke="#111" stroke-width="1.6"/></svg>
<div class="a" style="left:24px;top:143px;width:1325px;height:13px;background:#cbced3;border-top:1px solid #868b91;border-bottom:1px solid #868b91"></div>
<div class="a" style="left:47px;top:144px;width:1248px;height:11px;background:#f7f8f9"></div>
<svg class="a" style="left:0px;top:143px;" width="1366" height="13" viewBox="0 0 1366 13"><rect x="27.6" y="5" width="1.2" height="2.2" fill="#444"/><rect x="65.4" y="5" width="1.2" height="2.2" fill="#444"/><rect x="84.3" y="4" width="1.2" height="4.5" fill="#444"/><rect x="103.2" y="5" width="1.2" height="2.2" fill="#444"/><text x="122.6" y="10.5" font-family="Liberation Sans" font-size="10" fill="#444" text-anchor="middle">1</text><rect x="141.0" y="5" width="1.2" height="2.2" fill="#444"/><rect x="159.9" y="4" width="1.2" height="4.5" fill="#444"/><rect x="178.8" y="5" width="1.2" height="2.2" fill="#444"/><text x="198.2" y="10.5" font-family="Liberation Sans" font-size="10" fill="#444" text-anchor="middle">2</text><rect x="216.6" y="5" width="1.2" height="2.2" fill="#444"/><rect x="235.5" y="4" width="1.2" height="4.5" fill="#444"/><rect x="254.4" y="5" width="1.2" height="2.2" fill="#444"/><text x="273.8" y="10.5" font-family="Liberation Sans" font-size="10" fill="#444" text-anchor="middle">3</text><rect x="292.2" y="5" width="1.2" height="2.2" fill="#444"/><rect x="311.1" y="4" width="1.2" height="4.5" fill="#444"/><rect x="330.0" y="5" width="1.2" height="2.2" fill="#444"/><text x="349.4" y="10.5" font-family="Liberation Sans" font-size="10" fill="#444" text-anchor="middle">4</text><rect x="367.8" y="5" width="1.2" height="2.2" fill="#444"/><rect x="386.7" y="4" width="1.2" height="4.5" fill="#444"/><rect x="405.6" y="5" width="1.2" height="2.2" fill="#444"/><text x="425.0" y="10.5" font-family="Liberation Sans" font-size="10" fill="#444" text-anchor="middle">5</text><rect x="443.4" y="5" width="1.2" height="2.2" fill="#444"/><rect x="462.3" y="4" width="1.2" height="4.5" fill="#444"/><rect x="481.2" y="5" width="1.2" height="2.2" fill="#444"/><text x="500.6" y="10.5" font-family="Liberation Sans" font-size="10" fill="#444" text-anchor="middle">6</text><rect x="519.0" y="5" width="1.2" height="2.2" fill="#444"/><rect x="537.9" y="4" width="1.2" height="4.5" fill="#444"/><rect x="556.8" y="5" width="1.2" height="2.2" fill="#444"/><text x="576.2" y="10.5" font-family="Liberation Sans" font-size="10" fill="#444" text-anchor="middle">7</text><rect x="594.6" y="5" width="1.2" height="2.2" fill="#444"/><rect x="613.5" y="4" width="1.2" height="4.5" fill="#444"/><rect x="632.4" y="5" width="1.2" height="2.2" fill="#444"/><text x="651.8" y="10.5" font-family="Liberation Sans" font-size="10" fill="#444" text-anchor="middle">8</text><rect x="670.2" y="5" width="1.2" height="2.2" fill="#444"/><rect x="689.1" y="4" width="1.2" height="4.5" fill="#444"/><rect x="708.0" y="5" width="1.2" height="2.2" fill="#444"/><text x="727.4" y="10.5" font-family="Liberation Sans" font-size="10" fill="#444" text-anchor="middle">9</text><rect x="745.8" y="5" width="1.2" height="2.2" fill="#444"/><rect x="764.7" y="4" width="1.2" height="4.5" fill="#444"/><rect x="783.6" y="5" width="1.2" height="2.2" fill="#444"/><text x="803.0" y="10.5" font-family="Liberation Sans" font-size="10" fill="#444" text-anchor="middle">10</text><rect x="821.4" y="5" width="1.2" height="2.2" fill="#444"/><rect x="840.3" y="4" width="1.2" height="4.5" fill="#444"/><rect x="859.2" y="5" width="1.2" height="2.2" fill="#444"/><text x="878.6" y="10.5" font-family="Liberation Sans" font-size="10" fill="#444" text-anchor="middle">11</text><rect x="897.0" y="5" width="1.2" height="2.2" fill="#444"/><rect x="915.9" y="4" width="1.2" height="4.5" fill="#444"/><rect x="934.8" y="5" width="1.2" height="2.2" fill="#444"/><text x="954.2" y="10.5" font-family="Liberation Sans" font-size="10" fill="#444" text-anchor="middle">12</text><rect x="972.6" y="5" width="1.2" height="2.2" fill="#444"/><rect x="991.5" y="4" width="1.2" height="4.5" fill="#444"/><rect x="1010.4" y="5" width="1.2" height="2.2" fill="#444"/><text x="1029.8" y="10.5" font-family="Liberation Sans" font-size="10" fill="#444" text-anchor="middle">13</text><rect x="1048.2" y="5" width="1.2" height="2.2" fill="#444"/><rect x="1067.1" y="4" width="1.2" height="4.5" fill="#444"/><rect x="1086.0" y="5" width="1.2" height="2.2" fill="#444"/><text x="1105.4" y="10.5" font-family="Liberation Sans" font-size="10" fill="#444" text-anchor="middle">14</text><rect x="1123.8" y="5" width="1.2" height="2.2" fill="#444"/><rect x="1142.7" y="4" width="1.2" height="4.5" fill="#444"/><rect x="1161.6" y="5" width="1.2" height="2.2" fill="#444"/><text x="1181.0" y="10.5" font-family="Liberation Sans" font-size="10" fill="#444" text-anchor="middle">15</text><rect x="1199.4" y="5" width="1.2" height="2.2" fill="#444"/><rect x="1218.3" y="4" width="1.2" height="4.5" fill="#444"/><rect x="1237.2" y="5" width="1.2" height="2.2" fill="#444"/><text x="1256.6" y="10.5" font-family="Liberation Sans" font-size="10" fill="#444" text-anchor="middle">16</text><rect x="1275.0" y="5" width="1.2" height="2.2" fill="#444"/><rect x="1293.9" y="4" width="1.2" height="4.5" fill="#444"/><rect x="1312.8" y="5" width="1.2" height="2.2" fill="#444"/><text x="1332.2" y="10.5" font-family="Liberation Sans" font-size="10" fill="#444" text-anchor="middle">17</text></svg>
<div class="a" style="left:142px;top:156px;width:1px;height:3px;background:#555"></div>
<div class="a" style="left:236px;top:156px;width:1px;height:3px;background:#555"></div>
<div class="a" style="left:330px;top:156px;width:1px;height:3px;background:#555"></div>
<div class="a" style="left:425px;top:156px;width:1px;height:3px;background:#555"></div>
<div class="a" style="left:520px;top:156px;width:1px;height:3px;background:#555"></div>
<div class="a" style="left:614px;top:156px;width:1px;height:3px;background:#555"></div>
<div class="a" style="left:708px;top:156px;width:1px;height:3px;background:#555"></div>
<div class="a" style="left:803px;top:156px;width:1px;height:3px;background:#555"></div>
<div class="a" style="left:897px;top:156px;width:1px;height:3px;background:#555"></div>
<div class="a" style="left:992px;top:156px;width:1px;height:3px;background:#555"></div>
<div class="a" style="left:1086px;top:156px;width:1px;height:3px;background:#555"></div>
<div class="a" style="left:1181px;top:156px;width:1px;height:3px;background:#555"></div>
<div class="a" style="left:1276px;top:156px;width:1px;height:3px;background:#555"></div>
<svg class="a" style="left:43px;top:140px;" width="11" height="22" viewBox="0 0 11 22"><path d="M0.5 0.5 H9.5 V3.5 L5 9 L9.5 14.5 V21.5 H0.5 V14.5 L5 9 L0.5 3.5 Z" fill="#d9dcdf" stroke="#55595f"/><path d="M0.5 15.5 H9.5" stroke="#55595f"/><rect x="1" y="1" width="8" height="2.5" fill="#fff"/><rect x="1" y="16" width="8" height="5" fill="#f4f4f4"/></svg>
<svg class="a" style="left:1289px;top:148px;" width="11" height="8" viewBox="0 0 11 8"><path d="M0.5 7.5 V3.5 L5 0.5 L9.5 3.5 V7.5 Z" fill="#dfe2e5" stroke="#5e6268"/></svg>
<div class="a" style="left:1353px;top:140px;width:9px;height:2px;background:#8a8f95"></div>
<div class="a" style="left:1349px;top:144px;width:17px;height:17px;background:#e6e8eb;border:1px solid #9aa0a6"></div>
<svg class="a" style="left:1352px;top:146px;" width="12" height="12" viewBox="0 0 12 12"><rect x="0.5" y="0.5" width="6" height="6" fill="#f5e8ee" stroke="#555"/><rect x="4.5" y="4.5" width="6" height="6" fill="#f5e8ee" stroke="#555"/></svg>
<div class="a" style="left:0px;top:162px;width:1349px;height:527px;background:#fff"></div>
<div class="a" style="left:0px;top:162px;width:24px;height:527px;background:#c9cdd2"></div>
<div class="a" style="left:5px;top:162px;width:14px;height:527px;background:#f4f5f7;border-left:1px solid #8f949a;border-right:1px solid #8f949a"></div>
<div class="a" style="left:6px;top:162px;width:12px;height:92px;background:#d5d8dc"></div>
<svg class="a" style="left:5px;top:0px;" width="14" height="689" viewBox="0 0 14 689"><text transform="translate(7,177.4) rotate(-90)" x="0" y="3.5" font-family="Liberation Sans" font-size="10" fill="#444" text-anchor="middle">1</text><rect x="5.5" y="195.7" width="2" height="1.3" fill="#333"/><rect x="4.5" y="214.6" width="4.5" height="1.2" fill="#444"/><rect x="5.5" y="233.5" width="2" height="1.3" fill="#333"/><rect x="5.5" y="271.3" width="2" height="1.3" fill="#333"/><rect x="4.5" y="290.2" width="4.5" height="1.2" fill="#444"/><rect x="5.5" y="309.1" width="2" height="1.3" fill="#333"/><text transform="translate(7,328.6) rotate(-90)" x="0" y="3.5" font-family="Liberation Sans" font-size="10" fill="#444" text-anchor="middle">1</text><rect x="5.5" y="346.9" width="2" height="1.3" fill="#333"/><rect x="4.5" y="365.8" width="4.5" height="1.2" fill="#444"/><rect x="5.5" y="384.7" width="2" height="1.3" fill="#333"/><text transform="translate(7,404.2) rotate(-90)" x="0" y="3.5" font-family="Liberation Sans" font-size="10" fill="#444" text-anchor="middle">2</text><rect x="5.5" y="422.5" width="2" height="1.3" fill="#333"/><rect x="4.5" y="441.4" width="4.5" height="1.2" fill="#444"/><rect x="5.5" y="460.3" width="2" height="1.3" fill="#333"/><text transform="translate(7,479.8) rotate(-90)" x="0" y="3.5" font-family="Liberation Sans" font-size="10" fill="#444" text-anchor="middle">3</text><rect x="5.5" y="498.1" width="2" height="1.3" fill="#333"/><rect x="4.5" y="517.0" width="4.5" height="1.2" fill="#444"/><rect x="5.5" y="535.9" width="2" height="1.3" fill="#333"/><text transform="translate(7,555.4) rotate(-90)" x="0" y="3.5" font-family="Liberation Sans" font-size="10" fill="#444" text-anchor="middle">4</text><rect x="5.5" y="573.7" width="2" height="1.3" fill="#333"/><rect x="4.5" y="592.6" width="4.5" height="1.2" fill="#444"/><rect x="5.5" y="611.5" width="2" height="1.3" fill="#333"/><text transform="translate(7,631.0) rotate(-90)" x="0" y="3.5" font-family="Liberation Sans" font-size="10" fill="#444" text-anchor="middle">5</text><rect x="5.5" y="649.3" width="2" height="1.3" fill="#333"/><rect x="4.5" y="668.2" width="4.5" height="1.2" fill="#444"/><rect x="5.5" y="687.1" width="2" height="1.3" fill="#333"/></svg>
<div class="a" style="left:24px;top:162px;width:1325px;height:527px;background:#fff"></div>
<div class="a" style="left:1349px;top:162px;width:17px;height:527px;background:#dde1e6;border-left:1px solid #e8ebee"></div>
<svg class="a" style="left:1353px;top:171px;" width="9" height="6" viewBox="0 0 9 6"><path d="M0 5.5 H9 L4.5 0.5 Z" fill="#3f4349"/></svg>
<div class="a" style="left:1349px;top:190px;width:16px;height:100px;background:linear-gradient(90deg,#f3f4f7,#e9ecf1 60%,#dde1e7);border:1px solid #8e949b;border-radius:2px"></div>
<svg class="a" style="left:1353px;top:237px;" width="9" height="8" viewBox="0 0 9 8"><path d="M0 0.5 H8 M0 2.5 H8 M0 4.5 H8 M0 6.5 H8" stroke="#7d838a" stroke-width="0.9"/></svg>
<svg class="a" style="left:1353px;top:626px;" width="9" height="6" viewBox="0 0 9 6"><path d="M0 0.5 H9 L4.5 5.5 Z" fill="#3f4349"/></svg>
<div class="a" style="left:1349px;top:637px;width:17px;height:1px;background:#c5cad0"></div>
<svg class="a" style="left:1353px;top:641px;" width="9" height="9" viewBox="0 0 9 9"><path d="M0.5 4 L4.5 0.5 L8.5 4 Z M0.5 8 L4.5 4.5 L8.5 8 Z" fill="#3f4349"/></svg>
<svg class="a" style="left:1352px;top:656px;" width="11" height="11" viewBox="0 0 11 11"><circle cx="5.5" cy="5.5" r="4" fill="#d7dade" stroke="#5e6268" stroke-width="1.2"/></svg>
<svg class="a" style="left:1353px;top:675px;" width="9" height="9" viewBox="0 0 9 9"><path d="M0.5 0.5 L4.5 4 L8.5 0.5 Z M0.5 4.5 L4.5 8 L8.5 4.5 Z" fill="#3f4349"/></svg>
<div class="a" style="left:48px;top:253px;width:1.5px;height:36px;background:#000"></div>
<div class="a t" style="left:48.30px;top:254.70px;font-size:32px;color:#000;font-family:'Liberation Serif',serif;font-weight:bold;font-style:normal;transform-origin:0 0;transform:scaleX(0.9785);-webkit-text-stroke:0.5px #000;">1.Допишите</div>
<div class="a t" style="left:229.39px;top:254.70px;font-size:32px;color:#000;font-family:'Liberation Serif',serif;font-weight:bold;font-style:normal;transform-origin:0 0;transform:scaleX(0.9830);-webkit-text-stroke:0.5px #000;">уравнения</div>
<div class="a t" style="left:392.24px;top:254.70px;font-size:32px;color:#000;font-family:'Liberation Serif',serif;font-weight:bold;font-style:normal;transform-origin:0 0;transform:scaleX(0.9794);-webkit-text-stroke:0.5px #000;">химических</div>
<div class="a t" style="left:576.29px;top:254.70px;font-size:32px;color:#000;font-family:'Liberation Serif',serif;font-weight:bold;font-style:normal;transform-origin:0 0;transform:scaleX(0.9591);-webkit-text-stroke:0.5px #000;">реакций</div>
<div class="a t" style="left:703.14px;top:254.70px;font-size:32px;color:#000;font-family:'Liberation Serif',serif;font-weight:bold;font-style:normal;transform-origin:0 0;transform:scaleX(1.0714);-webkit-text-stroke:0.5px #000;">и</div>
<div class="a t" style="left:733.59px;top:254.70px;font-size:32px;color:#000;font-family:'Liberation Serif',serif;font-weight:bold;font-style:normal;transform-origin:0 0;transform:scaleX(0.9593);-webkit-text-stroke:0.5px #000;">расставьте</div>
<div class="a t" style="left:896.57px;top:254.70px;font-size:32px;color:#000;font-family:'Liberation Serif',serif;font-weight:bold;font-style:normal;transform-origin:0 0;transform:scaleX(0.9831);-webkit-text-stroke:0.5px #000;">коэффициенты:</div>
<div class="a t" style="left:73.36px;top:294.94px;font-size:40px;color:#000;font-family:'Liberation Sans',sans-serif;font-weight:normal;font-style:normal;transform-origin:0 0;transform:scaleX(1.0740);-webkit-text-stroke:0.5px #000;">Mg</div>
<div class="a" style="left:146px;top:312.7px;width:18.3px;height:3.2px;background:#000;border-radius:1px"></div>
<div class="a" style="left:153.6px;top:305.0px;width:3.2px;height:18.6px;background:#000;border-radius:1px"></div>
<div class="a t" style="left:179.32px;top:294.94px;font-size:40px;color:#000;font-family:'Liberation Sans',sans-serif;font-weight:normal;font-style:normal;transform-origin:0 0;transform:scaleX(0.7449);-webkit-text-stroke:0.5px #000;">F</div>
<div class="a t" style="left:196.79px;top:316.64px;font-size:25px;color:#000;font-family:'Liberation Sans',sans-serif;font-weight:normal;font-style:normal;transform-origin:0 0;transform:scaleX(0.9670);-webkit-text-stroke:0.2px #000;">2</div>
<div class="a" style="left:223.8px;top:309.3px;width:18.2px;height:3.3px;background:#000;border-radius:1.6px"></div>
<div class="a" style="left:223.8px;top:315.7px;width:18.2px;height:3.5px;background:#000;border-radius:1.6px"></div>
<svg class="a" style="left:258.6px;top:324.0px;" width="25.4" height="5" viewBox="0 0 25.4 5"><circle cx="2.30" cy="2.3" r="2.3" fill="#000"/><circle cx="12.70" cy="2.3" r="2.3" fill="#000"/><circle cx="23.10" cy="2.3" r="2.3" fill="#000"/></svg>
<div class="a t" style="left:73.45px;top:343.94px;font-size:40px;color:#000;font-family:'Liberation Sans',sans-serif;font-weight:normal;font-style:normal;transform-origin:0 0;transform:scaleX(1.0460);-webkit-text-stroke:0.5px #000;">Na</div>
<div class="a" style="left:142.4px;top:361.7px;width:18.3px;height:3.2px;background:#000;border-radius:1px"></div>
<div class="a" style="left:150.0px;top:354.0px;width:3.2px;height:18.6px;background:#000;border-radius:1px"></div>
<div class="a t" style="left:174.26px;top:343.94px;font-size:40px;color:#000;font-family:'Liberation Sans',sans-serif;font-weight:normal;font-style:normal;transform-origin:0 0;transform:scaleX(0.9697);-webkit-text-stroke:0.5px #000;">Cl</div>
<div class="a t" style="left:209.69px;top:365.64px;font-size:25px;color:#000;font-family:'Liberation Sans',sans-serif;font-weight:normal;font-style:normal;transform-origin:0 0;transform:scaleX(1.0462);-webkit-text-stroke:0.2px #000;">2</div>
<div class="a" style="left:238.4px;top:358.3px;width:18.3px;height:3.3px;background:#000;border-radius:1.6px"></div>
<div class="a" style="left:238.4px;top:364.7px;width:18.3px;height:3.5px;background:#000;border-radius:1.6px"></div>
<svg class="a" style="left:272.3px;top:373.0px;" width="25.7" height="5" viewBox="0 0 25.7 5"><circle cx="2.30" cy="2.3" r="2.3" fill="#000"/><circle cx="12.85" cy="2.3" r="2.3" fill="#000"/><circle cx="23.40" cy="2.3" r="2.3" fill="#000"/></svg>
<div class="a t" style="left:73.92px;top:394.14px;font-size:40px;color:#000;font-family:'Liberation Sans',sans-serif;font-weight:normal;font-style:normal;transform-origin:0 0;transform:scaleX(0.9000);-webkit-text-stroke:0.5px #000;">K</div>
<div class="a" style="left:110.9px;top:411.9px;width:18.6px;height:3.2px;background:#000;border-radius:1px"></div>
<div class="a" style="left:118.6px;top:404.2px;width:3.2px;height:18.6px;background:#000;border-radius:1px"></div>
<div class="a t" style="left:142.40px;top:394.14px;font-size:40px;color:#000;font-family:'Liberation Sans',sans-serif;font-weight:normal;font-style:normal;transform-origin:0 0;transform:scaleX(1.0000);-webkit-text-stroke:0.5px #000;">H</div>
<div class="a t" style="left:171.46px;top:415.84px;font-size:25px;color:#000;font-family:'Liberation Sans',sans-serif;font-weight:normal;font-style:normal;transform-origin:0 0;transform:scaleX(0.9143);-webkit-text-stroke:0.2px #000;">2</div>
<div class="a" style="left:198.7px;top:408.5px;width:18.3px;height:3.3px;background:#000;border-radius:1.6px"></div>
<div class="a" style="left:198.7px;top:414.9px;width:18.3px;height:3.5px;background:#000;border-radius:1.6px"></div>
<svg class="a" style="left:232px;top:423.2px;" width="26.6" height="5" viewBox="0 0 26.6 5"><circle cx="2.30" cy="2.3" r="2.3" fill="#000"/><circle cx="13.30" cy="2.3" r="2.3" fill="#000"/><circle cx="24.30" cy="2.3" r="2.3" fill="#000"/></svg>
<div class="a t" style="left:81.19px;top:453.14px;font-size:40px;color:#000;font-family:'Liberation Sans',sans-serif;font-weight:normal;font-style:normal;transform-origin:0 0;transform:scaleX(0.9279);-webkit-text-stroke:0.5px #000;">Zn</div>
<div class="a" style="left:136.9px;top:470.9px;width:19.1px;height:3.2px;background:#000;border-radius:1px"></div>
<div class="a" style="left:144.8px;top:463.2px;width:3.2px;height:18.6px;background:#000;border-radius:1px"></div>
<svg class="a" style="left:169.6px;top:456.5px;" width="32" height="32" viewBox="0 0 32 32"><circle cx="16" cy="16" r="13.4" fill="none" stroke="#000" stroke-width="3.4"/></svg>
<div class="a t" style="left:203.39px;top:474.84px;font-size:25px;color:#000;font-family:'Liberation Sans',sans-serif;font-weight:normal;font-style:normal;transform-origin:0 0;transform:scaleX(0.9670);-webkit-text-stroke:0.2px #000;">2</div>
<div class="a" style="left:230.2px;top:467.5px;width:19.2px;height:3.3px;background:#000;border-radius:1.6px"></div>
<div class="a" style="left:230.2px;top:473.9px;width:19.2px;height:3.5px;background:#000;border-radius:1.6px"></div>
<svg class="a" style="left:265px;top:482.2px;" width="25.6" height="5" viewBox="0 0 25.6 5"><circle cx="2.30" cy="2.3" r="2.3" fill="#000"/><circle cx="12.80" cy="2.3" r="2.3" fill="#000"/><circle cx="23.30" cy="2.3" r="2.3" fill="#000"/></svg>
<div class="a t" style="left:82.00px;top:502.64px;font-size:40px;color:#000;font-family:'Liberation Sans',sans-serif;font-weight:normal;font-style:normal;transform-origin:0 0;transform:scaleX(1.0061);-webkit-text-stroke:0.5px #000;">Al</div>
<div class="a" style="left:129.5px;top:520.4px;width:19.3px;height:3.2px;background:#000;border-radius:1px"></div>
<div class="a" style="left:137.6px;top:512.7px;width:3.2px;height:18.6px;background:#000;border-radius:1px"></div>
<svg class="a" style="left:162.2px;top:506.0px;" width="32" height="32" viewBox="0 0 32 32"><circle cx="16" cy="16" r="13.4" fill="none" stroke="#000" stroke-width="3.4"/></svg>
<div class="a t" style="left:196.10px;top:524.34px;font-size:25px;color:#000;font-family:'Liberation Sans',sans-serif;font-weight:normal;font-style:normal;transform-origin:0 0;transform:scaleX(0.9582);-webkit-text-stroke:0.2px #000;">2</div>
<div class="a" style="left:222.9px;top:517.0px;width:19.1px;height:3.3px;background:#000;border-radius:1.6px"></div>
<div class="a" style="left:222.9px;top:523.4px;width:19.1px;height:3.5px;background:#000;border-radius:1.6px"></div>
<svg class="a" style="left:257.7px;top:531.7px;" width="25.6" height="5" viewBox="0 0 25.6 5"><circle cx="2.30" cy="2.3" r="2.3" fill="#000"/><circle cx="12.80" cy="2.3" r="2.3" fill="#000"/><circle cx="23.30" cy="2.3" r="2.3" fill="#000"/></svg>
<div class="a t" style="left:82.30px;top:552.34px;font-size:40px;color:#000;font-family:'Liberation Sans',sans-serif;font-weight:normal;font-style:normal;transform-origin:0 0;transform:scaleX(0.7500);-webkit-text-stroke:0.5px #000;">Li</div>
<div class="a" style="left:118.2px;top:570.1px;width:18.7px;height:3.2px;background:#000;border-radius:1px"></div>
<div class="a" style="left:126.0px;top:562.4px;width:3.2px;height:18.6px;background:#000;border-radius:1px"></div>
<svg class="a" style="left:150.3px;top:555.7px;" width="32" height="32" viewBox="0 0 32 32"><circle cx="16" cy="16" r="13.4" fill="none" stroke="#000" stroke-width="3.4"/></svg>
<div class="a t" style="left:185.14px;top:574.04px;font-size:25px;color:#000;font-family:'Liberation Sans',sans-serif;font-weight:normal;font-style:normal;transform-origin:0 0;transform:scaleX(0.9319);-webkit-text-stroke:0.2px #000;">2</div>
<div class="a" style="left:211.9px;top:566.7px;width:18.3px;height:3.3px;background:#000;border-radius:1.6px"></div>
<div class="a" style="left:211.9px;top:573.1px;width:18.3px;height:3.5px;background:#000;border-radius:1.6px"></div>
<svg class="a" style="left:245.8px;top:581.4px;" width="26.5" height="5" viewBox="0 0 26.5 5"><circle cx="2.30" cy="2.3" r="2.3" fill="#000"/><circle cx="13.25" cy="2.3" r="2.3" fill="#000"/><circle cx="24.20" cy="2.3" r="2.3" fill="#000"/></svg>
<div class="a t" style="left:81.56px;top:601.74px;font-size:40px;color:#000;font-family:'Liberation Sans',sans-serif;font-weight:normal;font-style:normal;transform-origin:0 0;transform:scaleX(0.9821);-webkit-text-stroke:0.5px #000;">H</div>
<div class="a t" style="left:110.44px;top:623.44px;font-size:25px;color:#000;font-family:'Liberation Sans',sans-serif;font-weight:normal;font-style:normal;transform-origin:0 0;transform:scaleX(0.9319);-webkit-text-stroke:0.2px #000;">2</div>
<div class="a" style="left:136.9px;top:619.5px;width:19.1px;height:3.2px;background:#000;border-radius:1px"></div>
<div class="a" style="left:144.8px;top:611.8px;width:3.2px;height:18.6px;background:#000;border-radius:1px"></div>
<svg class="a" style="left:169.6px;top:605.1px;" width="32" height="32" viewBox="0 0 32 32"><circle cx="16" cy="16" r="13.4" fill="none" stroke="#000" stroke-width="3.4"/></svg>
<div class="a t" style="left:203.39px;top:623.44px;font-size:25px;color:#000;font-family:'Liberation Sans',sans-serif;font-weight:normal;font-style:normal;transform-origin:0 0;transform:scaleX(0.9670);-webkit-text-stroke:0.2px #000;">2</div>
<div class="a" style="left:230.2px;top:616.1px;width:19.2px;height:3.3px;background:#000;border-radius:1.6px"></div>
<div class="a" style="left:230.2px;top:622.5px;width:19.2px;height:3.5px;background:#000;border-radius:1.6px"></div>
<svg class="a" style="left:264px;top:630.8px;" width="27.5" height="5" viewBox="0 0 27.5 5"><circle cx="2.30" cy="2.3" r="2.3" fill="#000"/><circle cx="13.75" cy="2.3" r="2.3" fill="#000"/><circle cx="25.20" cy="2.3" r="2.3" fill="#000"/></svg>
<div class="a" style="left:240px;top:448px;width:20px;height:1px;background:#9a9a9a"></div>
<div class="a" style="left:0px;top:689px;width:1349px;height:17px;background:#dde1e6"></div>
<svg class="a" style="left:5px;top:693px;" width="6" height="9" viewBox="0 0 6 9"><path d="M5.5 0 V9 L0.5 4.5 Z" fill="#3f4349"/></svg>
<div class="a" style="left:209px;top:689px;width:1044px;height:16px;background:linear-gradient(#f3f4f7,#e9ecf1 60%,#dde1e7);border:1px solid #8e949b;border-radius:2px"></div>
<svg class="a" style="left:727px;top:693px;" width="8" height="9" viewBox="0 0 8 9"><path d="M0.5 0 V8 M2.5 0 V8 M4.5 0 V8 M6.5 0 V8" stroke="#7d838a" stroke-width="0.9"/></svg>
<svg class="a" style="left:1338px;top:693px;" width="6" height="9" viewBox="0 0 6 9"><path d="M0.5 0 V9 L5.5 4.5 Z" fill="#3f4349"/></svg>
<div class="a" style="left:1349px;top:689px;width:17px;height:17px;background:#dde1e6"></div>
<div class="a" style="left:0px;top:706px;width:1366px;height:22px;background:linear-gradient(#f1f3f5,#e2e5e9)"></div>
<div class="a" style="left:0px;top:706px;width:1366px;height:1px;background:#a4a9af"></div>
<div class="a t" style="left:8.47px;top:712.33px;font-size:10.6px;color:#444;font-family:'Liberation Sans',sans-serif;font-weight:normal;font-style:normal;letter-spacing:0.310px;">Страница: 1 из 1</div>
<div class="a" style="left:105px;top:707px;width:1px;height:21px;background:#b9bdc3"></div>
<div class="a" style="left:106px;top:707px;width:1px;height:21px;background:#fbfcfc"></div>
<div class="a t" style="left:114.20px;top:712.33px;font-size:10.6px;color:#444;font-family:'Liberation Sans',sans-serif;font-weight:normal;font-style:normal;letter-spacing:0.292px;">Число слов: 128</div>
<div class="a" style="left:207px;top:707px;width:1px;height:21px;background:#b9bdc3"></div>
<div class="a" style="left:208px;top:707px;width:1px;height:21px;background:#fbfcfc"></div>
<svg class="a" style="left:215px;top:709px;" width="18" height="16" viewBox="0 0 18 16"><path d="M1 10 L8 5 L15 9 L8 14 Z" fill="#e9eef7" stroke="#6a80a8"/><path d="M4 7 L7 11 L16 1" fill="none" stroke="#3e6cb8" stroke-width="2"/></svg>
<div class="a t" style="left:248.31px;top:712.33px;font-size:10.6px;color:#444;font-family:'Liberation Sans',sans-serif;font-weight:normal;font-style:normal;letter-spacing:0.896px;">русский</div>
<div class="a" style="left:300px;top:707px;width:1px;height:21px;background:#b9bdc3"></div>
<div class="a" style="left:301px;top:707px;width:1px;height:21px;background:#fbfcfc"></div>
<div class="a" style="left:1088px;top:707px;width:1px;height:21px;background:#b9bdc3"></div>
<div class="a" style="left:1089px;top:707px;width:1px;height:21px;background:#fbfcfc"></div>
<div class="a" style="left:1093px;top:708px;width:19px;height:19px;background:linear-gradient(#fde9a3,#fbd872);border:1px solid #e3b34a;border-radius:2px"></div>
<svg class="a" style="left:1096px;top:711px;" width="13" height="13" viewBox="0 0 13 13"><rect x="0.5" y="0.5" width="12" height="12" fill="#fff" stroke="#3a3a3a"/><path d="M2.5 3.5 H10.5 M2.5 5.5 H10.5 M2.5 7.5 H10.5 M2.5 9.5 H10.5" stroke="#3a3a3a"/></svg>
<svg class="a" style="left:1116px;top:711px;" width="13" height="13" viewBox="0 0 13 13"><path d="M0.5 1.5 H6.5 V12.5 H0.5 Z M6.5 1.5 H12.5 V12.5 H6.5 Z" fill="#fff" stroke="#555"/><path d="M2 4.5 H5 M2 6.5 H5 M2 8.5 H5 M8 4.5 H11 M8 6.5 H11 M8 8.5 H11" stroke="#777"/></svg>
<svg class="a" style="left:1132px;top:711px;" width="14" height="14" viewBox="0 0 14 14"><rect x="0.5" y="0.5" width="10" height="10" fill="#fff" stroke="#555"/><path d="M2 3.5 H9 M2 5.5 H9 M2 7.5 H7" stroke="#666"/><circle cx="10.5" cy="10.5" r="3.2" fill="#2f8ea0"/><circle cx="10" cy="10" r="1.4" fill="#7cc8b8"/></svg>
<svg class="a" style="left:1152px;top:711px;" width="11" height="12" viewBox="0 0 11 12"><path d="M0.5 1.5 H2.5 M0.5 4.5 H2.5 M0.5 7.5 H2.5 M0.5 10.5 H2.5 M4 1.5 H10 M5 4.5 H10 M5 7.5 H10 M4 10.5 H10" stroke="#666"/></svg>
<svg class="a" style="left:1170px;top:711px;" width="12" height="12" viewBox="0 0 12 12"><path d="M0 1.5 H11 M0 3.5 H11 M0 5.5 H11 M0 7.5 H11 M0 9.5 H11 M0 11.5 H11" stroke="#555"/></svg>
<div class="a t" style="left:1194.47px;top:713.33px;font-size:10.6px;color:#444;font-family:'Liberation Sans',sans-serif;font-weight:normal;font-style:normal;letter-spacing:0.255px;">200%</div>
<svg class="a" style="left:1229px;top:708px;" width="19" height="19" viewBox="0 0 19 19"><defs><linearGradient id="zg" x1="0" y1="0" x2="0" y2="1"><stop offset="0" stop-color="#fff"/><stop offset="1" stop-color="#dfe2e6"/></linearGradient></defs><circle cx="9.5" cy="9.5" r="8" fill="url(#zg)" stroke="#8d9298"/><rect x="5" y="8.5" width="9" height="2" fill="#333"/></svg>
<div class="a" style="left:1247px;top:716px;width:99px;height:1px;background:#8d9298"></div>
<div class="a" style="left:1296px;top:712px;width:1px;height:9px;background:#8d9298"></div>
<svg class="a" style="left:1304px;top:709px;" width="10" height="16" viewBox="0 0 10 16"><path d="M0.5 0.5 H9 V10 L4.75 14.5 L0.5 10 Z" fill="#f5f6f8" stroke="#6e7379"/></svg>
<svg class="a" style="left:1346px;top:708px;" width="19" height="19" viewBox="0 0 19 19"><circle cx="9.5" cy="9.5" r="8" fill="url(#zg)" stroke="#8d9298"/><rect x="5" y="8.5" width="9" height="2" fill="#333"/><rect x="8.5" y="5" width="2" height="9" fill="#333"/></svg>
<div class="a" style="left:0px;top:728px;width:1366px;height:40px;background:#050a0e"></div>
<svg class="a" style="left:16px;top:740px;" width="17" height="17" viewBox="0 0 17 17"><path d="M0 2.3 L7 1.3 V8 H0 Z M8 1.1 L17 0 V8 H8 Z M0 9 H7 V15.7 L0 14.7 Z M8 9 H17 V17 L8 15.9 Z" fill="#fff"/></svg>
<svg class="a" style="left:64px;top:739px;" width="17" height="18" viewBox="0 0 17 18"><circle cx="10.5" cy="6.5" r="5.3" fill="none" stroke="#fff" stroke-width="1.3"/><path d="M6.8 10.3 L0.8 16.5" stroke="#fff" stroke-width="1.5"/></svg>
<svg class="a" style="left:110px;top:740px;" width="20" height="15" viewBox="0 0 20 15"><rect x="4.5" y="0.5" width="11" height="14" fill="none" stroke="#fff" stroke-width="1.2"/><path d="M2.5 2.5 H0.6 V12.5 H2.5 M17.5 2.5 H19.4 V12.5 H17.5" fill="none" stroke="#fff" stroke-width="1.2"/></svg>
<svg class="a" style="left:161px;top:737px;" width="18" height="23" viewBox="0 0 18 23"><rect x="0" y="0" width="18" height="23" fill="#fff"/><rect x="2" y="2" width="14" height="4" fill="#050a0e"/><g fill="#050a0e"><rect x="2" y="8" width="3" height="3"/><rect x="7" y="8" width="3" height="3"/><rect x="12" y="8" width="3" height="3"/><rect x="2" y="13" width="3" height="3"/><rect x="7" y="13" width="3" height="3"/><rect x="12" y="13" width="3" height="3"/><rect x="2" y="18" width="3" height="3"/><rect x="7" y="18" width="3" height="3"/><rect x="12" y="18" width="3" height="3"/></g></svg>
<svg class="a" style="left:207px;top:737px;" width="23" height="23" viewBox="0 0 23 23"><defs><linearGradient id="og" x1="0" y1="0" x2="0" y2="1"><stop offset="0" stop-color="#ff3b3b"/><stop offset="1" stop-color="#b8000e"/></linearGradient></defs><ellipse cx="11.5" cy="11.5" rx="11" ry="11.2" fill="url(#og)"/><ellipse cx="11.5" cy="11.5" rx="4" ry="7.8" fill="#3a0005"/></svg>
<svg class="a" style="left:256px;top:739px;" width="22" height="19" viewBox="0 0 22 19"><path d="M0 2 H7 L9 4 H21 V18 H0 Z" fill="#e9c764"/><rect x="0" y="6" width="22" height="12" fill="#f7dd86"/><rect x="6" y="10" width="10" height="4" fill="#3fa6e0"/><rect x="8" y="14" width="6" height="4" fill="#3fa6e0"/></svg>
<svg class="a" style="left:305px;top:737px;" width="23" height="23" viewBox="0 0 23 23"><circle cx="11.5" cy="11.5" r="11" fill="#f3f3f3"/><path d="M6.5 5 L11.5 12 V19 M16.5 5 L11.5 12" stroke="#e21d1d" stroke-width="2.3" fill="none"/></svg>
<svg class="a" style="left:354px;top:737px;" width="23" height="23" viewBox="0 0 23 23"><circle cx="11.5" cy="11.5" r="11" fill="#db4437"/><path d="M11.5 11.5 L22.2 8.5 A11 11 0 0 1 8 22 Z" fill="#f4c20d"/><path d="M11.5 11.5 L8 22 A11 11 0 0 1 1 6 Z" fill="#0f9d58"/><circle cx="11.5" cy="11.5" r="5" fill="#fff"/><circle cx="11.5" cy="11.5" r="4" fill="#4285f4"/></svg>
<div class="a" style="left:391px;top:728px;width:160px;height:40px;background:#3a3d40"></div>
<div class="a" style="left:391px;top:765px;width:160px;height:3px;background:#8fd0f5"></div>
<svg class="a" style="left:402px;top:738px;" width="21" height="20" viewBox="0 0 21 20"><path d="M4 1 H17 L20 4 V19 H4 Z" fill="#eef3fb" stroke="#9fb4d6"/><text x="10" y="15" font-family="Liberation Serif" font-weight="bold" font-size="15" fill="#1d5bb8" text-anchor="middle">W</text></svg>
<div class="a t" style="left:428.88px;top:742.27px;font-size:11.5px;color:#fff;font-family:'Liberation Sans',sans-serif;font-weight:normal;font-style:normal;letter-spacing:0.037px;">дз уравнения реак...</div>
<svg class="a" style="left:1135px;top:743px;" width="12" height="8" viewBox="0 0 12 8"><path d="M0.5 7.5 L6 1.5 L11.5 7.5" fill="none" stroke="#fff" stroke-width="1.2"/></svg>
<svg class="a" style="left:1157px;top:741px;" width="16" height="13" viewBox="0 0 16 13"><rect x="5" y="3" width="10.5" height="8" fill="none" stroke="#fff" stroke-width="1.2"/><rect x="7" y="5" width="7" height="4" fill="#fff"/><path d="M0 7 H5 M2 4 V6 M4 4 V6" stroke="#fff" stroke-width="1.2"/></svg>
<svg class="a" style="left:1184px;top:740px;" width="16" height="15" viewBox="0 0 16 15"><path d="M1 14 A13 13 0 0 1 14 1 M4 14 A10 10 0 0 1 14 4 M7 14 A7 7 0 0 1 14 7" fill="none" stroke="#fff" stroke-width="1.3"/><rect x="11" y="11" width="4" height="4" fill="#fff"/></svg>
<svg class="a" style="left:1206px;top:741px;" width="16" height="14" viewBox="0 0 16 14"><path d="M0.5 4.5 H3.5 L8 0.8 V13.2 L3.5 9.5 H0.5 Z" fill="none" stroke="#fff" stroke-width="1.1"/><path d="M10.5 5 L14.5 9 M14.5 5 L10.5 9" stroke="#fff" stroke-width="1.1"/></svg>
<svg class="a" style="left:1229px;top:740px;" width="17" height="17" viewBox="0 0 17 17"><path d="M0.5 0.5 H16.5 V11.5 H10 L8 15 L6 11.5 H0.5 Z" fill="#fff"/><path d="M3.5 3.5 H13.5 M3.5 6 H13.5 M3.5 8.5 H10" stroke="#050a0e" stroke-width="1.2"/></svg>
<div class="a t" style="left:1256.08px;top:741.77px;font-size:11.5px;color:#fff;font-family:'Liberation Sans',sans-serif;font-weight:normal;font-style:normal;letter-spacing:0.161px;">РУС</div>
<div class="a t" style="left:1308.42px;top:732.77px;font-size:11.5px;color:#fff;font-family:'Liberation Sans',sans-serif;font-weight:normal;font-style:normal;letter-spacing:0.071px;">21:35</div>
<div class="a t" style="left:1296.14px;top:749.57px;font-size:11.5px;color:#fff;font-family:'Liberation Sans',sans-serif;font-weight:normal;font-style:normal;letter-spacing:-0.353px;">13.04.2019</div>
<div class="a" style="left:1362px;top:728px;width:1px;height:40px;background:#3a3f44"></div>
</body></html>
